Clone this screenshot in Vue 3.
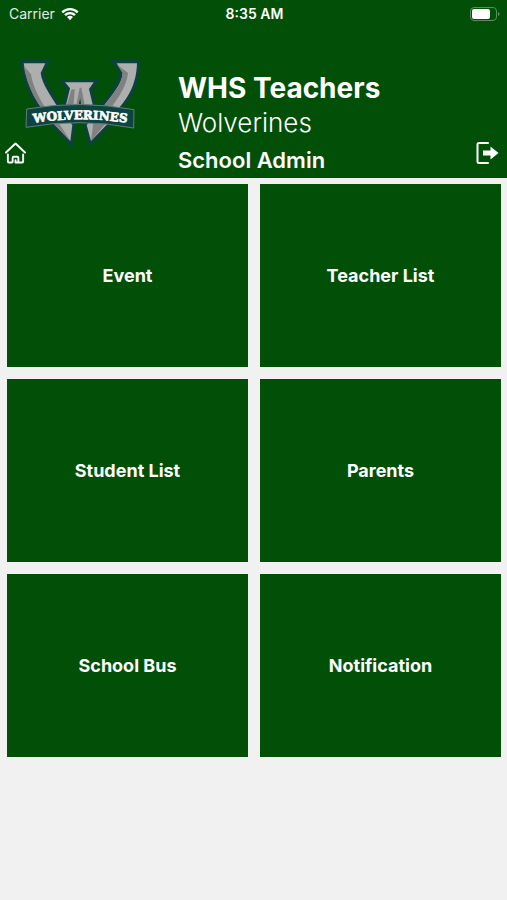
<script setup>
import { ref } from 'vue'

const school = ref({
  name: 'WHS Teachers',
  team: 'Wolverines',
  role: 'School Admin'
})

const menuItems = [
  { id: 'event', label: 'Event' },
  { id: 'teachers', label: 'Teacher List' },
  { id: 'students', label: 'Student List' },
  { id: 'parents', label: 'Parents' },
  { id: 'bus', label: 'School Bus' },
  { id: 'notification', label: 'Notification' }
]

const emit = defineEmits(['home', 'logout', 'open'])
</script>

<template>
  <div class="app">
    <header class="header">
      <div class="status-bar">
        <div class="carrier">
          <span>Carrier</span>
          <svg class="wifi" viewBox="0 0 18 14" aria-hidden="true">
            <path d="M0.4 4.5A12.3 12.3 0 0 1 17.6 4.5L15.9 6.2A9.8 9.8 0 0 0 2.1 6.2Z" />
            <path d="M3.2 7.3A8.3 8.3 0 0 1 14.8 7.3L13.1 9A5.9 5.9 0 0 0 4.9 9Z" />
            <path d="M6 10.1A4.3 4.3 0 0 1 12 10.1L9 13.2Z" />
          </svg>
        </div>
        <span class="time">8:35 AM</span>
        <svg class="battery" viewBox="0 0 30 14" aria-hidden="true">
          <rect x="0.5" y="0.5" width="26" height="13" rx="3.5" fill="none" stroke="#5c8c5f" />
          <rect x="2" y="2" width="18" height="10" rx="2" fill="#fff" />
          <path d="M28 5Q29.6 5.6 29.6 7T28 9Z" fill="#5c8c5f" />
        </svg>
      </div>

      <div class="banner">
        <svg class="logo" viewBox="30 27 366 276" role="img" aria-label="Wolverines logo">
          <g class="logo-outline">
            <path d="M41 43H106L92 64C96 105 122 140 146 178L187 228L181 276L125 218C82 165 52 118 41 43Z" />
            <path d="M320 43H381C379 112 350 150 325 180L299 218L243 276L230 228L275 178C305 140 336 105 338 66Z" />
            <path d="M165 100H251L237 120L252 184H164L180 118Z" />
          </g>
          <path class="metal" d="M41 43H106L92 72C96 105 122 140 146 178L187 228L181 276L125 218C82 165 52 118 41 43Z" />
          <path class="shade" d="M41 50L63 76C68 112 88 150 112 185L148 224L181 276L125 218C82 165 52 118 41 50Z" />
          <path class="metal" d="M320 43H381C379 112 350 150 325 180L299 218L243 276L230 228L275 178C305 140 336 105 338 72Z" />
          <path class="shade" d="M322 47L354 72C350 110 328 142 301 180H275C305 140 336 105 338 72Z" />
          <path class="shade" d="M250 222H288L243 276Z" />
          <path class="metal" d="M165 100H251L237 120L252 184H218L211 140L202 184H164L180 118Z" />
          <path class="shade" d="M184 122L194 120L190 184H166Z" />
          <path class="shade" d="M209 116L214 116L227 184H216L210 144L203 184H196Z" />
          <path class="ribbon" d="M50 180Q210 152 372 182L371 237Q210 206 48 235Z" />
          <path id="ribbon-line" d="M60 223Q210 199 362 223" fill="none" />
          <text class="ribbon-text" text-anchor="middle">
            <textPath href="#ribbon-line" startOffset="50%">WOLVERINES</textPath>
          </text>
        </svg>

        <button class="icon-button home" type="button" aria-label="Home" @click="emit('home')">
          <svg viewBox="0 0 22 24" aria-hidden="true">
            <path d="M1 11.5L11 2L21 11.5" />
            <path d="M3 13.5V21Q3 22 4 22H7Q8 22 8 21V17Q8 16 9 16H13Q14 16 14 17V21Q14 22 13 22H11V19.5M14 22H18Q19 22 19 21V13.5" />
          </svg>
        </button>

        <div class="titles">
          <h1 class="name">{{ school.name }}</h1>
          <p class="team">{{ school.team }}</p>
          <p class="role">{{ school.role }}</p>
        </div>

        <button class="icon-button logout" type="button" aria-label="Log out" @click="emit('logout')">
          <svg viewBox="0 0 24 24" aria-hidden="true">
            <path d="M13 2H4Q2.5 2 2.5 3.5V20.5Q2.5 22 4 22H13" />
            <path class="arrow" d="M8 9.5H15.5V5.5L23.5 12L15.5 18.5V14.5H8Z" />
          </svg>
        </button>
      </div>
    </header>

    <main class="menu">
      <button
        v-for="item in menuItems"
        :key="item.id"
        class="tile"
        type="button"
        @click="emit('open', item.id)"
      >
        {{ item.label }}
      </button>
    </main>
  </div>
</template>

<style>
body {
  background-color: #f1f1f1;
}
</style>

<style scoped>
.app {
  min-height: 100vh;
  background-color: #f1f1f1;
  color: #fff;
  font-family: Inter, "Liberation Sans", sans-serif;
}

.header {
  background-color: #024f08;
  padding-bottom: 2px;
}

.status-bar {
  display: grid;
  grid-template-columns: 1fr auto 1fr;
  align-items: center;
  height: 27px;
  padding: 0 7px 0 9px;
  font-size: 14px;
}

.carrier {
  display: flex;
  align-items: center;
  gap: 6px;
  color: #e0ebe0;
}

.wifi {
  width: 18px;
  height: 14px;
  fill: #fff;
}

.time {
  font-weight: 600;
}

.battery {
  justify-self: end;
  width: 30px;
  height: 14px;
}

/* the home button shares the row with the logo and sits at its lower left */
.banner {
  display: grid;
  grid-template-columns: 15px 122px 36px 1fr auto;
  padding: 31px 8px 0 5px;
}

.logo {
  grid-area: 1 / 2;
  width: 122px;
  height: 92px;
}

.logo-outline path {
  fill: #0b4239;
  stroke: #0b4239;
  stroke-width: 20;
}

.metal {
  fill: #adaeae;
}

.shade {
  fill: #7f8281;
}

.ribbon {
  fill: #0d4441;
  stroke: #5f7d76;
  stroke-width: 3;
}

.ribbon-text {
  fill: #fff;
  stroke: #fff;
  stroke-width: 2;
  font-family: "DejaVu Serif", serif;
  font-size: 36px;
  font-weight: 700;
}

.icon-button {
  align-self: end;
  padding: 0;
  border: none;
  background: none;
  color: #fff;
  cursor: pointer;
}

.icon-button svg {
  display: block;
  fill: none;
  stroke: currentColor;
  stroke-width: 2;
  stroke-linecap: round;
  stroke-linejoin: round;
}

.home {
  grid-area: 1 / 1 / 2 / 3;
  justify-self: start;
  margin-bottom: 11px;
}

.home svg {
  width: 21px;
  height: 24px;
}

.logout {
  grid-area: 1 / 5;
  margin-bottom: 11px;
}

.logout svg {
  width: 24px;
  height: 24px;
}

.logout .arrow {
  fill: currentColor;
  stroke: none;
}

.titles {
  grid-area: 1 / 4;
  padding-top: 12px;
}

.name,
.team,
.role {
  margin: 0;
}

.name {
  font-size: 28px;
  font-weight: 700;
  line-height: 36px;
}

.team {
  font-size: 26px;
  font-weight: 300;
  line-height: 34px;
}

.role {
  margin-top: 4px;
  font-size: 22px;
  font-weight: 600;
  line-height: 32px;
}

.menu {
  display: grid;
  grid-template-columns: 1fr 1fr;
  grid-auto-rows: 183px;
  gap: 12px;
  padding: 6px 6px 12px 7px;
}

.tile {
  padding: 0 12px;
  border: none;
  background-color: #024f08;
  color: #fff;
  font-family: inherit;
  font-size: 18px;
  font-weight: 700;
  cursor: pointer;
}

.tile:active {
  background-color: #013d06;
}
</style>
